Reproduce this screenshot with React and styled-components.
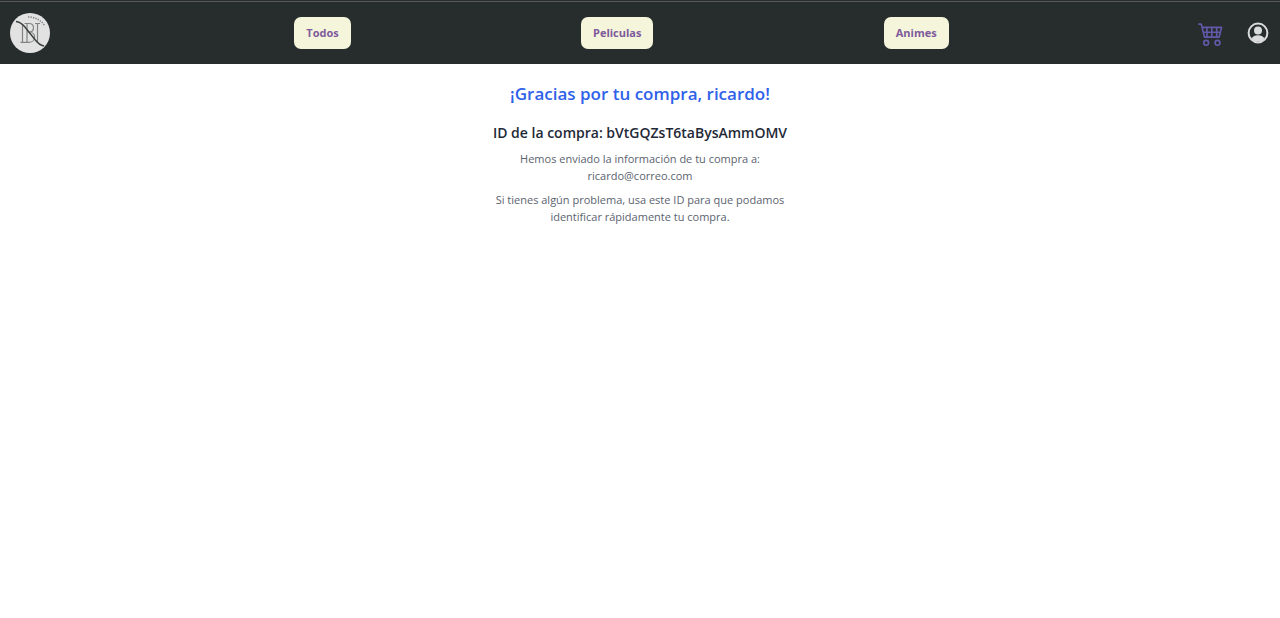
import React from "react";
import styled, { createGlobalStyle } from "styled-components";
import { BsCart4 } from "react-icons/bs";

const GlobalStyle = createGlobalStyle`
  *, *::before, *::after { box-sizing: border-box; }
  body {
    margin: 0;
    background: #fff;
    font-family: "Segoe UI", "Open Sans", "Noto Sans", sans-serif;
  }
`;

const Header = styled.header`
  display: flex;
  align-items: center;
  height: 64px;
  padding: 2px 11px 0 10px;
  background: linear-gradient(#292d2e 1px, #57595a 1px, #57595a 2px, #272d2d 2px);
`;

const LogoLink = styled.a`
  display: flex;
  flex: 0 0 auto;
  width: 54px;
`;

const LogoMark = styled.svg`
  display: block;
  width: 40px;
  height: 40px;
`;

const Nav = styled.nav`
  display: flex;
  flex: 1;
  justify-content: space-evenly;
`;

const NavButton = styled.button`
  height: 32px;
  padding: 0 12px;
  border: 0;
  border-radius: 7px;
  background: #f5f5dc;
  color: #7e5a9b;
  font: 700 11px/18px "Segoe UI", "Open Sans", "Noto Sans", sans-serif;
  cursor: pointer;
`;

const Actions = styled.div`
  display: flex;
  flex: 0 0 auto;
  align-items: center;
  justify-content: flex-end;
  gap: 23px;
  width: 90px;
`;

const IconButton = styled.button`
  display: flex;
  padding: 0;
  border: 0;
  background: none;
  color: ${(p) => p.$color};
  cursor: pointer;
`;

const Receipt = styled.main`
  display: flex;
  flex-direction: column;
  align-items: center;
  padding: 16px;
  text-align: center;
`;

const Thanks = styled.h1`
  margin: 0 0 15px;
  color: #2f62e9;
  font-size: 17px;
  font-weight: 600;
  line-height: 28px;
`;

const PurchaseId = styled.h2`
  margin: 0 0 7px;
  color: #1f2937;
  font-size: 14px;
  font-weight: 600;
  line-height: 20px;
`;

const Note = styled.p`
  max-width: 304px;
  margin: 0 0 7px;
  color: #5b636f;
  font-size: 11px;
  line-height: 17px;
`;

const Logo = () => (
  <LogoMark viewBox="0 0 40 40" aria-hidden="true">
    <circle cx="20" cy="20" r="20" fill="#e2e2e2" />
    <g fill="none" stroke="#808283" strokeWidth="1.200">
      <path d="M12.500 12v17M10.500 29.300h4.500M17 10.500v18.800M14.500 10.500h4.500c6 0 6 8.500 0 8.500h-2M19 19c7.500 0 7.500 10.300 0 10.300h-5" />
      <path d="M27.500 10.500v19M25 10.500h5" />
    </g>
    <path d="M6 8.500c4 .5 6 2 8.500 5l10 12.500c3 4 6 6.500 9.500 7" fill="none" stroke="#3b3e3f" strokeWidth="1.400" />
    <path d="M18 4c7 0 13 3 17 9" fill="none" stroke="#808283" strokeWidth="1.600" strokeDasharray="1.300 1.200" />
  </LogoMark>
);

const ProfileIcon = () => (
  <svg width="22" height="22" viewBox="0 0 22 22" aria-hidden="true">
    <circle cx="11" cy="11" r="9.400" fill="none" stroke="currentColor" strokeWidth="2" />
    <circle cx="11" cy="8.600" r="4" fill="currentColor" />
    <path d="M4.300 16.800c1.500-2.500 3.800-3.500 6.700-3.500s5.200 1 6.700 3.500C16 18.700 13.700 19.800 11 19.800s-5-1.100-6.700-3z" fill="currentColor" />
  </svg>
);

export default function App() {
  return (
    <>
      <GlobalStyle />
      <Header>
        <LogoLink href="#" aria-label="Inicio">
          <Logo />
        </LogoLink>
        <Nav>
          {["Todos", "Peliculas", "Animes"].map((name) => (
            <NavButton key={name} type="button">{name}</NavButton>
          ))}
        </Nav>
        <Actions>
          <IconButton type="button" aria-label="Carrito" $color="#6259a8">
            <BsCart4 size={26} />
          </IconButton>
          <IconButton type="button" aria-label="Perfil" $color="#d9dbdc">
            <ProfileIcon />
          </IconButton>
        </Actions>
      </Header>
      <Receipt>
        <Thanks>¡Gracias por tu compra, ricardo!</Thanks>
        <PurchaseId>ID de la compra: bVtGQZsT6taBysAmmOMV</PurchaseId>
        <Note>
          Hemos enviado la información de tu compra a:
          <br />
          ricardo@correo.com
        </Note>
        <Note>
          Si tienes algún problema, usa este ID para que podamos identificar rápidamente tu compra.
        </Note>
      </Receipt>
    </>
  );
}
